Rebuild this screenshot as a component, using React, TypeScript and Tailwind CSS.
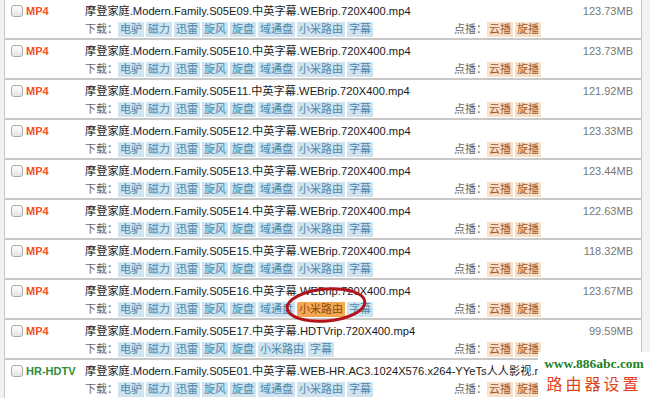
import React from 'react'

type Row = { fmt: string; ep: string; src: string; res: string; size?: string; yutong?: boolean; hot?: boolean }

const ROWS: Row[] = [
  { fmt: 'MP4', ep: 'S05E09', src: 'WEBrip', res: '720X400', size: '123.73MB' },
  { fmt: 'MP4', ep: 'S05E10', src: 'WEBrip', res: '720X400', size: '123.73MB' },
  { fmt: 'MP4', ep: 'S05E11', src: 'WEBrip', res: '720X400', size: '121.92MB' },
  { fmt: 'MP4', ep: 'S05E12', src: 'WEBrip', res: '720X400', size: '123.33MB' },
  { fmt: 'MP4', ep: 'S05E13', src: 'WEBrip', res: '720X400', size: '123.44MB' },
  { fmt: 'MP4', ep: 'S05E14', src: 'WEBrip', res: '720X400', size: '122.63MB' },
  { fmt: 'MP4', ep: 'S05E15', src: 'WEBrip', res: '720X400', size: '118.32MB' },
  { fmt: 'MP4', ep: 'S05E16', src: 'WEBrip', res: '720X400', size: '123.67MB', hot: true },
  { fmt: 'MP4', ep: 'S05E17', src: 'HDTVrip', res: '720X400', size: '99.59MB', yutong: false },
  { fmt: 'HR-HDTV', ep: 'S05E01', src: 'WEB-HR.AC3', res: '1024X576.x264-YYeTs人人影视' },
]

const tagCls = 'px-[2px] h-[15px] leading-[15px] bg-[#cfe4ee] text-[#4a87ad]'
const playCls = 'px-[2px] h-[15px] leading-[15px] bg-[#f6e0ca] text-[#a4562c]'

function Checkbox() {
  return <span className="mt-[1px] w-[12px] h-[12px] shrink-0 rounded-[3px] border border-[#a9a9a9] bg-linear-to-b from-white to-[#e4e4e4]" />
}

function FileRow({ r }: { r: Row }) {
  const tags = ['电驴', '磁力', '迅雷', '旋风', '旋盘', ...(r.yutong === false ? [] : ['域通盘']), '小米路由', '字幕']
  return (
    <div className="h-[40px] border border-[#c8c8c8] bg-white flex">
      <div className="w-[80px] shrink-0 flex items-start gap-[3px] pl-[6px] pt-[4px]">
        <Checkbox />
        <span className={`font-bold text-[11px] leading-[14px] ${r.fmt === 'MP4' ? 'text-[#f4511e]' : 'text-[#2e8b3a]'}`}>{r.fmt}</span>
      </div>
      <div className="flex-1 min-w-0 flex flex-col pt-[3px]">
        <div className="flex justify-between h-[16px] items-center pr-[8px] whitespace-nowrap">
          <span className="text-[#1a1a1a] text-[11.2px]">摩登家庭.Modern.Family.{r.ep}.中英字幕.{r.src}.{r.res}.mp4</span>
          {r.size && <span className="text-[#777]">{r.size}</span>}
        </div>
        <div className="flex items-center mt-[2px] whitespace-nowrap">
          <span className="text-[#666]">下载：</span>
          <div className="flex gap-[2px]">
            {tags.map((t) => (
              <span key={t} className={r.hot && t === '小米路由' ? 'px-[2px] h-[15px] leading-[15px] bg-[#f5aa52] text-[#8a4612]' : tagCls}>{t}</span>
            ))}
          </div>
          <div className="ml-auto mr-[100px] flex items-center">
            <span className="text-[#666]">点播：</span>
            <div className="flex gap-[2px]">
              <span className={playCls}>云播</span>
              <span className={playCls}>旋播</span>
            </div>
          </div>
        </div>
      </div>
    </div>
  )
}

export default function App() {
  return (
    <div className="relative w-[650px] h-[398px] overflow-hidden bg-[#f2f2f2] text-[11px] font-['Liberation_Sans','Noto_Sans_CJK_SC',sans-serif]">
      <div className="ml-[4px] w-[638px] -mt-[1px] flex flex-col">
        {ROWS.map((r) => <FileRow key={r.ep} r={r} />)}
      </div>

      {/* red circle round the 小米路由 tag */}
      <svg className="absolute left-[283px] top-[284px]" width="86" height="42" viewBox="0 0 86 42">
        <ellipse cx="43" cy="21" rx="39" ry="16" fill="none" stroke="#b3141c" strokeWidth="3" transform="rotate(-5 43 21)" />
      </svg>

      {/* watermark */}
      <div className="absolute left-[538px] top-[352px] w-[112px] h-[46px] bg-white flex flex-col items-center pt-[4px]">
        <span className="font-['Liberation_Serif',serif] font-bold text-[13.5px] leading-[15px] text-[#1c7f25]">www.886abc.com</span>
        <span className="mt-[2px] text-[16px] leading-[20px] tracking-[3px] text-[#e2431b] font-['Noto_Sans_CJK_SC',sans-serif]">路由器设置</span>
      </div>
    </div>
  )
}
